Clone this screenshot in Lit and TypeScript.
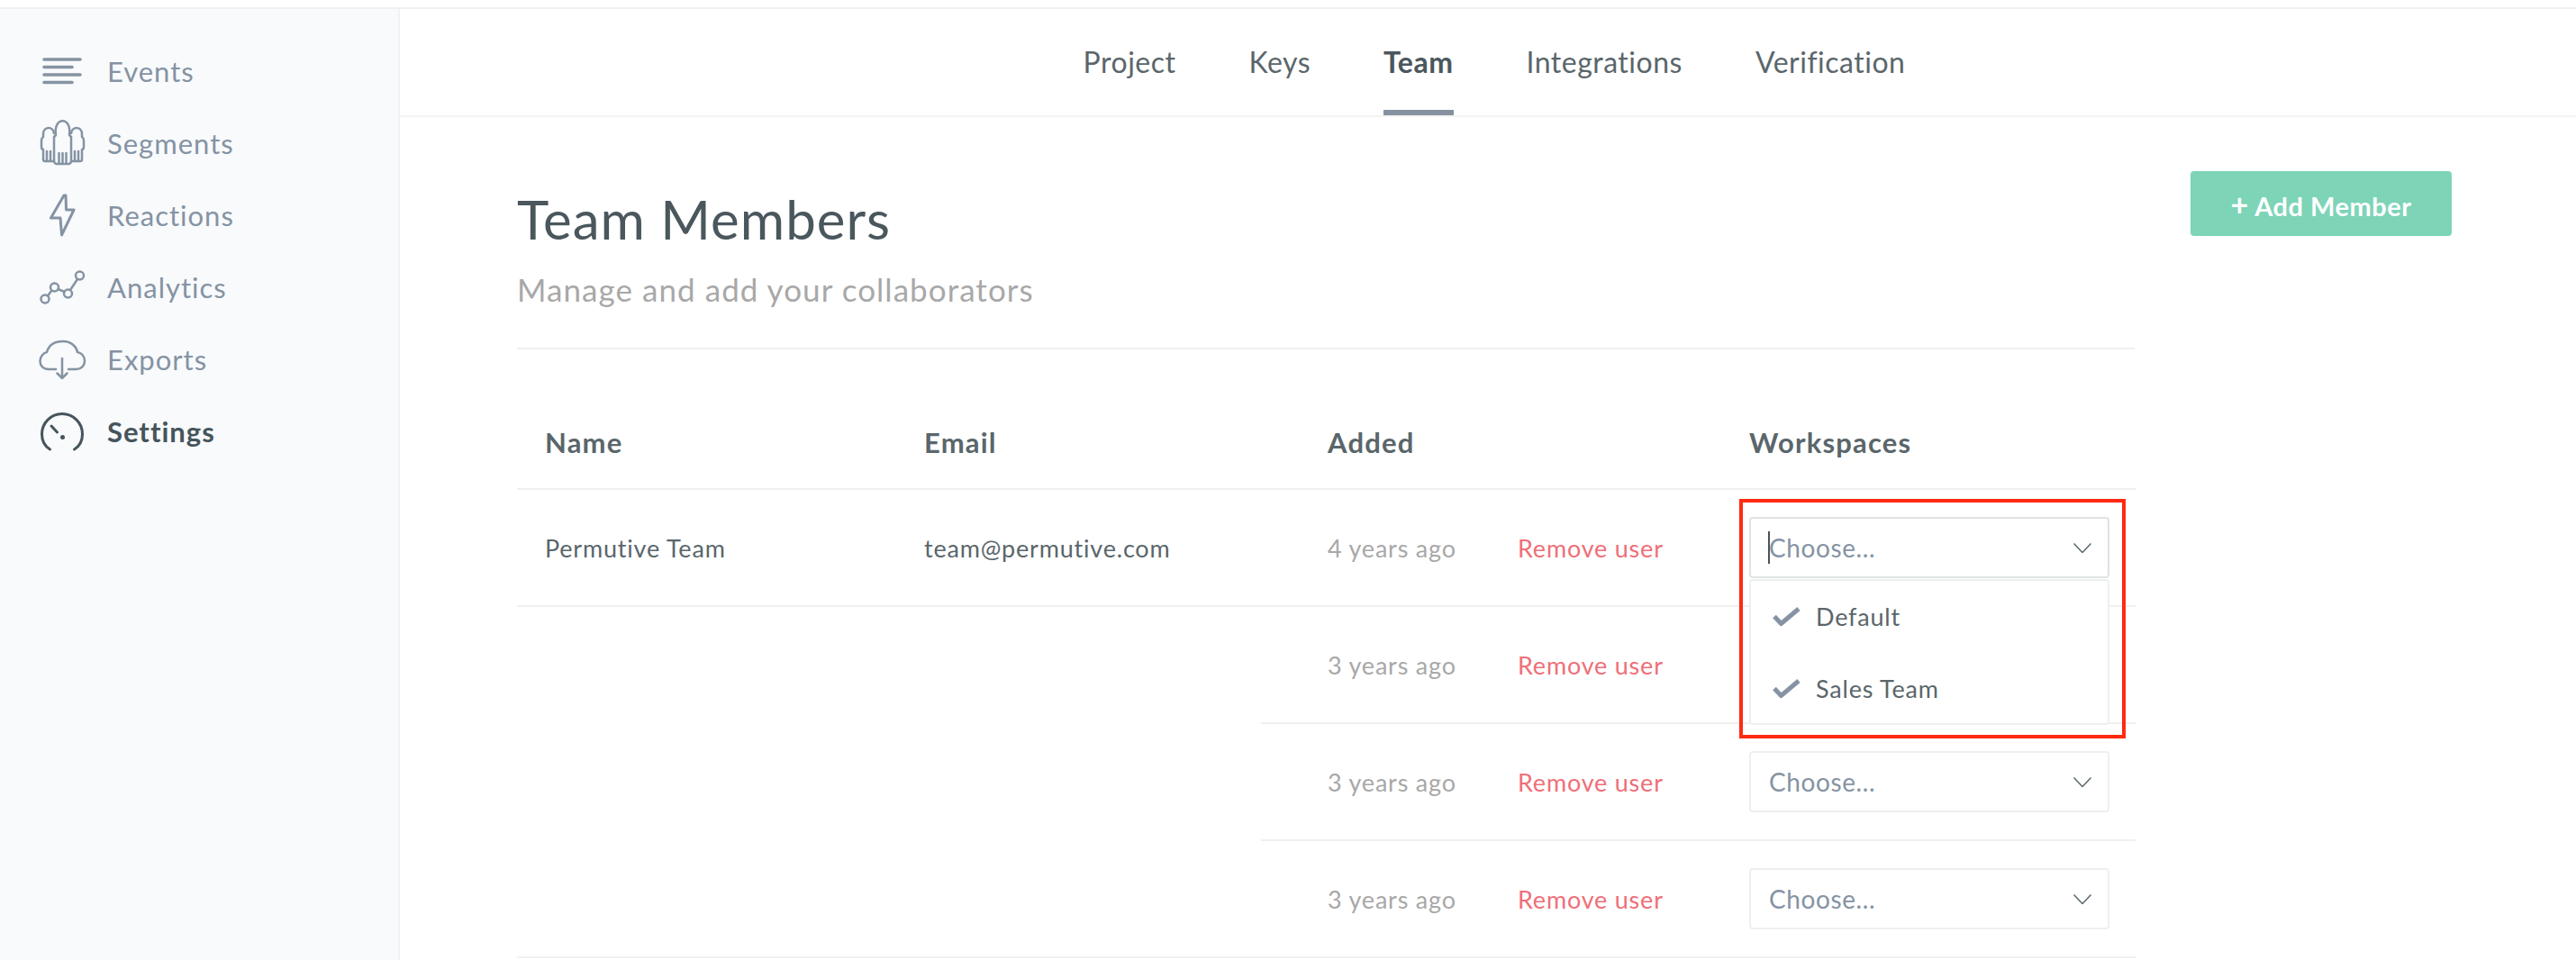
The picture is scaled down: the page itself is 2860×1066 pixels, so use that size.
import { LitElement, css, html, svg } from 'lit'
import { customElement } from 'lit/decorators.js'

const navItems = [
  {
    label: 'Events',
    box: '39 49 60 60',
    icon: svg`<path d="M49 66H89M49 74.500H80M49 83H89M49 91.500H80" stroke-width="3.600" />`,
  },
  {
    label: 'Segments',
    box: '39 129 60 60',
    icon: svg`
      <path d="M62 150c-3-21 18-21 15 0l2 2v27a3 3 0 0 1-3 3H63a3 3 0 0 1-3-3v-27z" />
      <path d="M65.500 170v11M69.500 170v11M73.500 170v11" />
      <path d="M60 148c-1-8-12-8-12 1v3c-2 1-2 3-2 5v6c0 2 1 3 2 3v11a2 2 0 0 0 2 2h10" />
      <path d="M52 168v11M56 168v11" />
      <path d="M79 148c1-8 12-8 12 1v3c2 1 2 3 2 5v6c0 2-1 3-2 3v11a2 2 0 0 1-2 2H79" />
      <path d="M83 168v11M87 168v11" />`,
  },
  {
    label: 'Reactions',
    box: '39 209 60 60',
    icon: svg`<path d="M71 217 56.500 242H67L68.500 261 82 233H73.500L73 217Z" stroke-width="3" />`,
  },
  {
    label: 'Analytics',
    box: '39 289 60 60',
    icon: svg`
      <circle cx="50" cy="332" r="4.500" /><circle cx="60.500" cy="319" r="4.500" />
      <circle cx="75.500" cy="326" r="4.500" /><circle cx="88.500" cy="306" r="4.500" />
      <path d="M53 328.500 57 323M64.500 321 71.500 324M78 322 86 310" />`,
  },
  {
    label: 'Exports',
    box: '39 369 60 60',
    icon: svg`
      <path d="M62 410H54C47 410 44.500 405 44.500 401 44.500 396 48 392 52 391 54 384 60 379 70 379 79 379 85 385 86 391 91 392 94 396 94 401 94 406 90 410 85 410H76" />
      <path d="M69 398V420M63.500 414.500 69 420 74.500 414.500" />`,
  },
  {
    label: 'Settings',
    box: '39 449 60 60',
    active: true,
    icon: svg`
      <path d="M55.500 499C49 495 46.500 489 46.500 482A22.500 22.500 0 0 1 91.500 482C91.500 489 89 495 82.500 499" stroke-width="3" />
      <path d="M57 473 63.500 480" stroke-width="3" />
      <circle cx="69.500" cy="485.500" r="2.500" class="solid" />`,
  },
]

const tabs = ['Project', 'Keys', 'Team', 'Integrations', 'Verification']

const members = [
  { name: 'Permutive Team', email: 'team@permutive.com', added: '4 years ago', open: true },
  { added: '3 years ago', inset: true, covered: true },
  { added: '3 years ago', inset: true },
  { added: '3 years ago' },
]

const chevron = html`<svg class="chevron" viewBox="0 0 20 11"><path d="M0.500 0.500 10 10.500 19.500 0.500" /></svg>`
const check = html`<svg class="check" viewBox="0 0 31 21"><path d="M2 10.500 9.500 18.500 29 2" /></svg>`

@customElement('app-root')
export class AppRoot extends LitElement {
  private renderSelect(open?: boolean) {
    return html`
      <div class="select-wrap">
        <div class="select ${open ? 'focused' : ''}">
          ${open ? html`<span class="caret"></span>` : ''}
          <span>Choose...</span>
          ${chevron}
        </div>
        ${open
          ? html`
              <div class="menu">
                <div class="option">${check}<span>Default</span></div>
                <div class="option">${check}<span>Sales Team</span></div>
              </div>
              <div class="highlight"></div>
            `
          : ''}
      </div>
    `
  }

  protected render() {
    return html`
      <div class="layout">
        <aside class="sidebar">
          ${navItems.map(
            (item) => html`
              <a class="nav-item ${item.active ? 'active' : ''}">
                <svg class="nav-icon" viewBox=${item.box}>${item.icon}</svg>
                <span>${item.label}</span>
              </a>
            `
          )}
        </aside>
        <main class="main">
          <nav class="tabs">
            ${tabs.map((tab) => html`<a class="tab ${tab === 'Team' ? 'active' : ''}">${tab}</a>`)}
          </nav>
          <div class="content">
            <div class="head">
              <div class="head-text">
                <h1>Team Members</h1>
                <p>Manage and add your collaborators</p>
              </div>
              <button class="add"><span class="plus">+</span> Add Member</button>
            </div>
            <div class="table">
              <div class="row header">
                <div class="who">
                  <span class="name">Name</span>
                  <span>Email</span>
                </div>
                <div class="details">
                  <span class="added">Added</span>
                  <span class="remove"></span>
                  <span>Workspaces</span>
                </div>
              </div>
              ${members.map(
                (member) => html`
                  <div class="row ${member.inset ? 'inset' : ''}">
                    <div class="who">
                      ${member.name
                        ? html`<span class="name">${member.name}</span><span>${member.email}</span>`
                        : ''}
                    </div>
                    <div class="details">
                      <span class="added muted">${member.added}</span>
                      <a class="remove danger">Remove user</a>
                      ${member.covered ? '' : this.renderSelect(member.open)}
                    </div>
                  </div>
                `
              )}
            </div>
          </div>
        </main>
      </div>
    `
  }

  static styles = css`
    :host {
      display: block;
      width: 2860px;
      height: 1066px;
      overflow: hidden;
      background: #fff;
      font-family: Lato, 'Liberation Sans', sans-serif;
      color: #5a666b;
    }
    * {
      box-sizing: border-box;
    }
    .layout {
      display: grid;
      grid-template-columns: 444px 1fr;
      height: 1058px;
      margin-top: 8px;
      border-top: 2px solid #f0f0f0;
    }
    .sidebar {
      background: #f8fafc;
      border-right: 2px solid #f0f2f4;
      padding-top: 29px;
    }
    .nav-item {
      display: flex;
      align-items: center;
      gap: 20px;
      height: 80px;
      padding-left: 39px;
      font-size: 31px;
      letter-spacing: 1px;
      color: #8593a3;
    }
    .nav-item.active {
      font-weight: 700;
      color: #46545b;
    }
    .nav-icon {
      width: 60px;
      height: 60px;
      fill: none;
      stroke: #8593a3;
      stroke-width: 2.500;
      stroke-linecap: round;
      stroke-linejoin: round;
    }
    .active .nav-icon {
      stroke: #46545b;
    }
    .nav-icon .solid {
      fill: #46545b;
      stroke: none;
    }
    .tabs {
      display: flex;
      justify-content: center;
      align-items: stretch;
      gap: 81px;
      height: 120px;
      padding-left: 14px;
      border-bottom: 2px solid #f3f3f3;
    }
    .tab {
      display: flex;
      align-items: center;
      height: 118px;
      padding-top: 4px;
      border-bottom: 6px solid transparent;
      font-size: 32px;
      letter-spacing: 0.5px;
    }
    .tab.active {
      font-weight: 700;
      color: #4a575d;
      border-bottom-color: #8591a0;
    }
    .content {
      padding: 60px 138px 0 130px;
    }
    .head {
      display: flex;
      justify-content: space-between;
      align-items: flex-start;
    }
    .head-text {
      width: 1796px;
      height: 198px;
      border-bottom: 2px solid #f0f0f0;
    }
    h1 {
      margin: 0;
      font-size: 60px;
      font-weight: 400;
      line-height: 106px;
      letter-spacing: 1px;
      color: #4a575d;
    }
    p {
      margin: 0;
      font-size: 35px;
      line-height: 50px;
      letter-spacing: 1.05px;
      color: #a8a8a8;
    }
    .add {
      flex: none;
      width: 290px;
      height: 72px;
      padding: 0;
      border: 0;
      border-radius: 4px;
      background: #7dd4b7;
      color: #fff;
      font: 700 29px Lato, 'Liberation Sans', sans-serif;
      letter-spacing: 0.5px;
    }
    .plus {
      font-size: 34px;
    }
    .table {
      width: 1797px;
      font-size: 27px;
      letter-spacing: 0.8px;
    }
    .row {
      display: flex;
      align-items: center;
      height: 130px;
      border-bottom: 2px solid #f0f0f0;
    }
    .row.inset {
      border-bottom: 0;
    }
    .row.inset .details {
      height: 130px;
      border-bottom: 2px solid #f0f0f0;
    }
    .row.header {
      height: 156px;
      align-items: flex-end;
      padding-bottom: 31px;
      font-size: 31px;
      font-weight: 700;
      line-height: 40px;
      letter-spacing: 1.2px;
    }
    .who {
      display: flex;
      flex: none;
      width: 826px;
    }
    .name {
      width: 452px;
      padding-left: 31px;
    }
    .details {
      display: flex;
      align-items: center;
      flex: 1;
      padding-left: 74px;
    }
    .added {
      width: 211px;
    }
    .remove {
      width: 257px;
    }
    .muted {
      color: #a8a8a8;
    }
    .danger {
      color: #ef6f78;
    }
    .select-wrap {
      position: relative;
      width: 400px;
    }
    .select {
      display: flex;
      align-items: center;
      justify-content: space-between;
      height: 68px;
      padding: 0 18px 0 20px;
      border: 2px solid #eef0f0;
      border-radius: 4px;
      background: #fff;
      color: #8593a3;
      font-size: 28px;
      letter-spacing: 0.6px;
    }
    .select.focused {
      border-color: #dfe3e3;
    }
    .caret {
      position: absolute;
      left: 21px;
      top: 16px;
      width: 2px;
      height: 36px;
      background: #46545b;
    }
    .chevron {
      width: 20px;
      height: 11px;
      fill: none;
      stroke: #5a666b;
      stroke-width: 1.500;
    }
    .menu {
      position: absolute;
      z-index: 1;
      top: 69px;
      left: 0;
      width: 400px;
      height: 162px;
      border: 2px solid #eef0f0;
      border-radius: 4px;
      background: #fff;
    }
    .option {
      display: flex;
      align-items: center;
      gap: 17px;
      height: 78px;
      margin-bottom: 2px;
      padding-left: 24px;
      color: #5a666b;
    }
    .check {
      width: 31px;
      height: 21px;
      fill: none;
      stroke: #8593a3;
      stroke-width: 5;
    }
    .highlight {
      position: absolute;
      z-index: 2;
      top: -20px;
      left: -11px;
      width: 429px;
      height: 266px;
      border: 4px solid #ff2a12;
    }
  `
}

declare global {
  interface HTMLElementTagNameMap {
    'app-root': AppRoot
  }
}
